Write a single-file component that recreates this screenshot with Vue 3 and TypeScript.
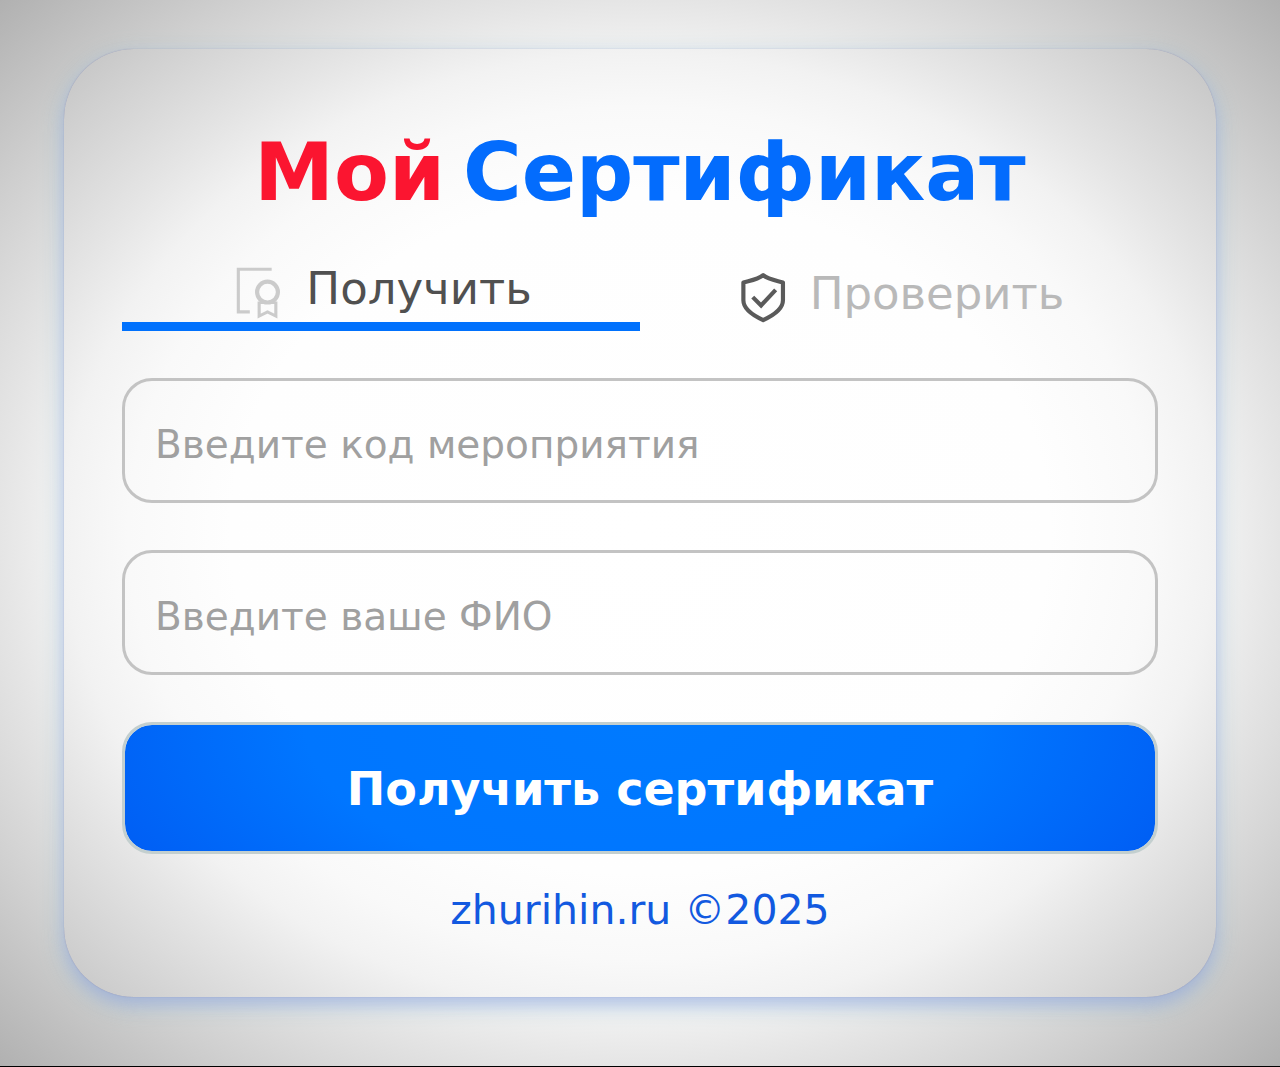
<script setup lang="ts">
import { ref } from 'vue'

type Tab = 'get' | 'check'

const tab = ref<Tab>('get')
const code = ref('')
const fullName = ref('')
</script>

<template>
  <main class="page">
    <section class="card">
      <h1 class="title">
        <span class="title-my">Мой</span>
        <span class="title-cert">Сертификат</span>
      </h1>

      <nav class="tabs">
        <button type="button" class="tab" :class="{ active: tab === 'get' }" @click="tab = 'get'">
          <svg class="icon" viewBox="-3 -1 48 48" fill="none" stroke="#cbcbcb" stroke-width="3">
            <path d="M37 4H5v41h11" />
            <circle cx="33" cy="26" r="10" stroke-width="4" />
            <path d="M25 35v14l8-4 8 4V35M26 36h14" />
          </svg>
          <span>Получить</span>
        </button>
        <button type="button" class="tab" :class="{ active: tab === 'check' }" @click="tab = 'check'">
          <svg class="icon" viewBox="-3 0 48 48" fill="none" stroke="#5a5a5a" stroke-width="4" stroke-linejoin="round">
            <path d="M25 6C20 10 13 11 6 13v17c0 8 8 14 19 19 11-5 19-11 19-19V13C37 11 30 10 25 6Z" />
            <path d="M15 27l8 8 14-15" stroke-linejoin="miter" />
          </svg>
          <span>Проверить</span>
        </button>
      </nav>

      <form class="form" @submit.prevent>
        <input v-model="code" class="field" type="text" placeholder="Введите код мероприятия" aria-label="Введите код мероприятия" />
        <input v-model="fullName" class="field" type="text" placeholder="Введите ваше ФИО" aria-label="Введите ваше ФИО" />
        <button class="submit" type="submit">Получить сертификат</button>
      </form>

      <footer class="footer">
        <a href="#">zhurihin.ru ©2025</a>
      </footer>
    </section>
  </main>
</template>

<style>
body {
  margin: 0;
}
</style>

<style scoped>
.page {
  box-sizing: border-box;
  min-height: 100vh;
  padding: 49px 5% 69px;
  border-bottom: 1px solid #000;
  background: radial-gradient(ellipse 100% 100% at center, #fff 0%, #fefefe 32%, #f9f9f9 40%, #f2f2f2 45%, #e5e5e5 50%, #cfcfcf 59%, #b0b0b0 71%);
  font-family: "DejaVu Sans", Verdana, sans-serif;
}

.card {
  padding: 76px 58px 59px;
  border-radius: 70px;
  box-shadow:
    0 0 1px rgba(110, 110, 170, 0.6),
    0 8px 18px rgba(125, 135, 220, 0.45),
    0 8px 26px rgba(170, 230, 225, 0.4);
}

.title {
  display: flex;
  justify-content: center;
  gap: 18px;
  margin: 0;
  font-size: 80px;
  line-height: 96px;
  font-weight: 700;
}

.title-my {
  color: #fb1530;
}

.title-cert {
  color: #036cfd;
}

.tabs {
  display: flex;
  margin-top: 35px;
}

.tab {
  display: flex;
  flex: 1;
  align-items: center;
  justify-content: center;
  gap: 26px;
  padding: 5px 0;
  border: 0;
  background: none;
  color: #b9b9b9;
  font: inherit;
  font-size: 45px;
  line-height: 56px;
  cursor: pointer;
}

.tab.active {
  border-bottom: 9px solid #0071fd;
  color: #505050;
}

.icon {
  width: 50px;
  height: 50px;
  overflow: visible;
}

.form {
  display: flex;
  flex-direction: column;
  gap: 47px;
  margin-top: 47px;
}

.field {
  box-sizing: border-box;
  width: 100%;
  height: 125px;
  padding: 8px 30px 0;
  border: 3px solid #c3c3c3;
  border-radius: 30px;
  background: transparent;
  color: #505050;
  font: inherit;
  font-size: 39px;
}

.field::placeholder {
  color: #a0a0a0;
  opacity: 1;
}

.submit {
  height: 132px;
  padding: 2px 0 0;
  border: 3px solid #c3cfcf;
  border-radius: 30px;
  background: radial-gradient(ellipse 65% 250% at 50% 0, #007aff 0%, #0076ff 50%, #0055f0 100%);
  background-clip: padding-box;
  color: #fff;
  font: inherit;
  font-size: 46px;
  font-weight: 700;
  cursor: pointer;
}

.footer {
  margin-top: 28px;
  text-align: center;
  font-size: 41px;
  line-height: 56px;
}

.footer a {
  color: #1259e0;
  text-decoration: none;
}
</style>
